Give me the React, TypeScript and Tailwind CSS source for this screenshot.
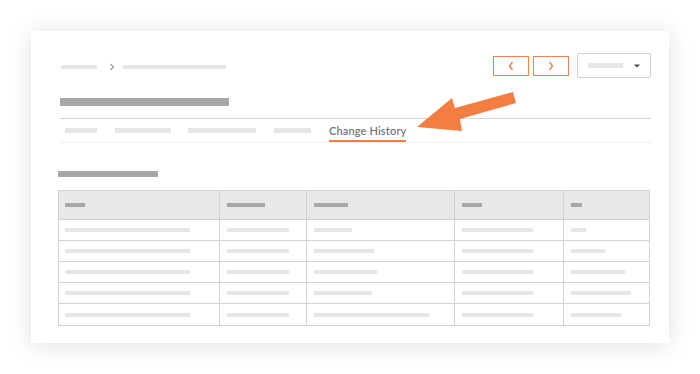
import React from "react";

const rows = [
  [125, 62, 38, 71, 15],
  [125, 62, 60, 71, 34],
  [125, 62, 63, 71, 54],
  [125, 62, 58, 71, 60],
  [125, 62, 115, 71, 50],
];

const headers = [20, 38, 34, 20, 11];

export default function App() {
  return (
    <div className="relative w-[700px] h-[374px] bg-white overflow-hidden" style={{ fontFamily: "Lato, 'Liberation Sans', sans-serif" }}>
      <div className="ml-[31px] mt-[31px] w-[638px] h-[312px] bg-white shadow-[0_2px_22px_rgba(0,0,0,0.13)] pl-[28px] pr-[18px] pt-[22px] flex flex-col">
        {/* header row */}
        <div className="flex items-center h-[25px]">
          <div className="flex items-center mt-[3px] ml-[2px]">
            <div className="w-[36px] h-[4px] bg-[#e6e6e6]" />
            <svg width="6" height="8" viewBox="0 0 6 8" className="ml-[12px]">
              <polyline points="1.5,1 4.5,4 1.5,7" fill="none" stroke="#999" strokeWidth="1.2" />
            </svg>
            <div className="ml-[8px] w-[103px] h-[4px] bg-[#e6e6e6]" />
          </div>
          <div className="ml-auto flex items-center">
            <div className="w-[36px] h-[20px] border border-[#f4834a] flex items-center justify-center">
              <svg width="8" height="12" viewBox="0 0 8 12">
                <polyline points="5.5,2 2.5,6 5.5,10" fill="none" stroke="#f47e42" strokeWidth="1.4" />
              </svg>
            </div>
            <div className="ml-[4px] w-[36px] h-[20px] border border-[#f4834a] flex items-center justify-center">
              <svg width="8" height="12" viewBox="0 0 8 12">
                <polyline points="2.5,2 5.5,6 2.5,10" fill="none" stroke="#f47e42" strokeWidth="1.4" />
              </svg>
            </div>
            <div className="ml-[8px] w-[74px] h-[25px] border border-[#cfcfcf] rounded-[2px] flex items-center pl-[10px] pr-[10px]">
              <div className="w-[35px] h-[5px] bg-[#e6e6e6]" />
              <svg width="6" height="4" viewBox="0 0 6 4" className="ml-auto">
                <polygon points="0,0.5 6,0.5 3,3.5" fill="#444" />
              </svg>
            </div>
          </div>
        </div>

        {/* title */}
        <div className="mt-[20px] ml-[1px] w-[169px] h-[8px] bg-[#a8a8a8]" />

        {/* tabs */}
        <div className="mt-[12px] ml-[1px] border-t border-[#d4d4d4] border-b border-b-[#eeeeee] h-[25px] flex items-stretch">
          <div className="flex items-center pl-[5px]">
            <div className="w-[32px] h-[5px] bg-[#e6e6e6]" />
            <div className="ml-[18px] w-[56px] h-[5px] bg-[#e6e6e6]" />
            <div className="ml-[17px] w-[68px] h-[5px] bg-[#e6e6e6]" />
            <div className="ml-[18px] w-[37px] h-[5px] bg-[#e6e6e6]" />
          </div>
          <div className="ml-[18px] relative flex items-center">
            <span className="text-[11px] font-semibold text-[#777777] leading-none -mt-[1px] tracking-[0.15px]">Change History</span>
            <div className="absolute left-0 right-0 bottom-0 h-[2px] bg-[#f47e42]" />
          </div>
        </div>

        {/* subtitle */}
        <div className="mt-[28px] -ml-[1px] w-[100px] h-[6px] bg-[#a8a8a8]" />

        {/* table */}
        <div className="mt-[13px] -ml-[1px] w-[592px] border border-[#d2d2d2] grid grid-cols-[160px_87px_148px_109px_86px]">
          {headers.map((w, i) => (
            <div
              key={"h" + i}
              className={`h-[29px] bg-[#e8e8e8] flex items-center ${i === 0 ? "pl-[6px]" : "pl-[7px]"} border-b border-[#d2d2d2] ${i > 0 ? "border-l" : ""}`}
            >
              <div className="h-[4px] bg-[#a8a8a8]" style={{ width: w }} />
            </div>
          ))}
          {rows.map((r, ri) =>
            r.map((w, ci) => (
              <div
                key={ri + "-" + ci}
                className={`h-[21px] flex items-center ${ci === 0 ? "pl-[6px]" : "pl-[7px]"} border-[#d2d2d2] ${ci > 0 ? "border-l" : ""} ${ri < rows.length - 1 ? "border-b" : ""}`}
              >
                <div className="h-[4px] bg-[#e6e6e6]" style={{ width: w }} />
              </div>
            ))
          )}
        </div>
      </div>

      {/* arrow overlay */}
      <svg className="absolute left-0 top-0 pointer-events-none" width="700" height="374" viewBox="0 0 700 374">
        <polygon points="513,92 516,103 460,119 462,131 417,127 452,98 455,108" fill="#f47e42" />
      </svg>
    </div>
  );
}
